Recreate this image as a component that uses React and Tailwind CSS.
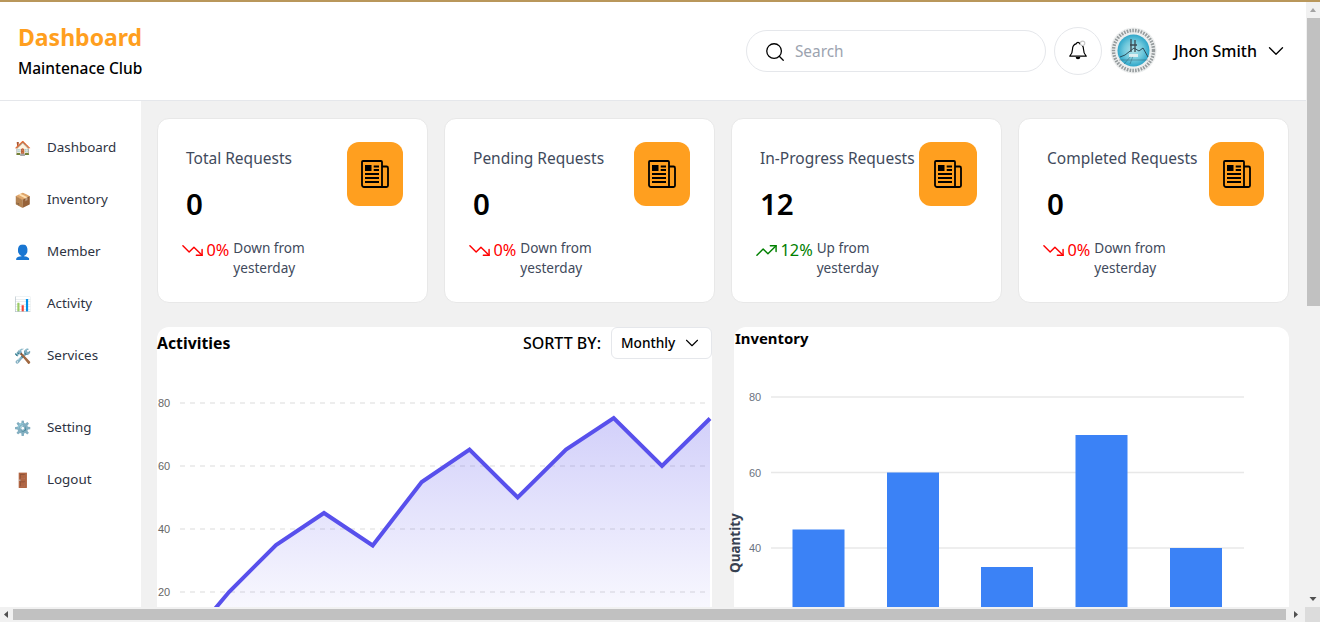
import React from "react";
import { ChevronDown, Search, TrendingDown, TrendingUp } from "lucide-react";

const NewsIcon = () => (
  <svg width="28" height="28" viewBox="0 0 28 28" fill="none">
    <path d="M1 2a1 1 0 0 1 1-1h18a1 1 0 0 1 1 1v25H3a2 2 0 0 1-2-2z" stroke="#000" strokeWidth="1.8" />
    <path d="M21 6.5h4.5a1.5 1.5 0 0 1 1.5 1.5v17.5a1.5 1.5 0 0 1-1.5 1.5H21" stroke="#000" strokeWidth="1.8" />
    <rect x="4" y="5" width="6.5" height="6" fill="#000" />
    <path d="M12.7 6.5H18M12.7 10H18M4 14h14M4 18h14M4 22h14" stroke="#000" strokeWidth="1.8" />
  </svg>
);

const BellIcon = () => (
  <svg width="22" height="22" viewBox="0 0 24 24" fill="none">
    <path d="M12 2.5c-.9 0-1.6.7-1.6 1.4C7.4 4.7 6 7.3 6 10c0 3.5-1 5.6-3 7.6h18c-2-2-3-4.1-3-7.6 0-2.7-1.4-5.3-4.4-6.1 0-.7-.7-1.4-1.6-1.4z" stroke="#000" strokeWidth="1.3" strokeLinejoin="round" />
    <path d="M9.5 18.5a2.5 2.5 0 0 0 5 0z" fill="#000" />
    <circle cx="17" cy="3.6" r="2.4" fill="#fff" stroke="#c8c8c8" strokeWidth="1.2" />
  </svg>
);

const Avatar = () => (
  <svg width="47" height="47" viewBox="0 0 47 47" className="ml-[8px] -mt-[1px] shrink-0">
    <defs>
      <radialGradient id="ball" cx="0.5" cy="0.5" r="0.5">
        <stop offset="0" stopColor="#b4e3ea" />
        <stop offset="0.6" stopColor="#6fc8dc" />
        <stop offset="1" stopColor="#2fa6c9" />
      </radialGradient>
    </defs>
    <circle cx="23.5" cy="23.5" r="23" fill="#eceeee" />
    <circle cx="23.5" cy="23.5" r="20" fill="none" stroke="#5c6468" strokeWidth="3.4" strokeDasharray="1.6 1.2" opacity="0.6" />
    <circle cx="23.5" cy="23.5" r="16" fill="url(#ball)" />
    <path d="M10 30l5-2 9-7 5 3 4-3 5 9" fill="none" stroke="#25404d" strokeWidth="0.9" />
    <path d="M9 33h29M14 37l7-8M20 37l3-8" stroke="#25404d" strokeWidth="0.6" opacity="0.6" />
    <path d="M21 12v13M25 13v12M20 18h7" stroke="#3c4a52" strokeWidth="1.3" />
    <path d="M19 27h9v3h-9z" fill="#f2f5f5" opacity="0.8" />
  </svg>
);

const stats = [
  { t: "Total Requests", v: "0", p: "0%", up: false, d: "Down from", iw: "w-14" },
  { t: "Pending Requests", v: "0", p: "0%", up: false, d: "Down from", iw: "w-14" },
  { t: "In-Progress Requests", v: "12", p: "12%", up: true, d: "Up from", iw: "w-[58px]" },
  { t: "Completed Requests", v: "0", p: "0%", up: false, d: "Down from", iw: "w-[55px]" },
];

const nav = [
  ["🏠", "Dashboard"],
  ["📦", "Inventory"],
  ["👤", "Member"],
  ["📊", "Activity"],
  ["🛠️", "Services"],
];
const nav2 = [
  ["⚙️", "Setting"],
  ["🚪", "Logout"],
];

const NavItem = ({ icon, label }) => (
  <div className="flex h-[52px] items-center pl-[14.5px]">
    <span className="w-[32.5px] text-sm leading-none" style={{ fontFamily: "'Noto Color Emoji', sans-serif" }}>{icon}</span>
    <span className="-mt-[1px] text-[13.4px] text-[#2d3342]">{label}</span>
  </div>
);

const Card = ({ s }) => (
  <div className="flex h-[185px] w-[271px] shrink-0 rounded-xl border border-[#e8e8e8] bg-white pl-[28px] pr-[24px] pt-[23px]">
    <div className="min-w-0 flex-1">
      <div className="mt-[6px] whitespace-nowrap text-[15.5px] leading-5 text-[#414a5c]">{s.t}</div>
      <div className="mt-[18px] text-[29.5px] font-semibold leading-9 text-black">{s.v}</div>
      <div className="-ml-[5px] mt-[16px] flex">
        {s.up ? (
          <TrendingUp size={23} strokeWidth={1.5} className="mt-[1px] shrink-0 text-[#008000]" />
        ) : (
          <TrendingDown size={23} strokeWidth={1.5} className="mt-[1px] shrink-0 text-[#ff0000]" />
        )}
        <span className={`ml-[2.5px] mt-[2px] text-[16.3px] leading-5 ${s.up ? "text-[#008000]" : "text-[#ff0000]"}`}>{s.p}</span>
        <span className="ml-[4px] w-[90px] text-[13.6px] leading-5 text-[#414a5c]">{s.d}<br />yesterday</span>
      </div>
    </div>
    <div className={`flex h-16 ${s.iw} shrink-0 items-center justify-center rounded-xl bg-[#ff9f1f]`}>
      <NewsIcon />
    </div>
  </div>
);

const activity = [[180.6,650],[229,592],[276,545],[324,513],[372.7,545.5],[421.7,482],[469.5,449.5],[517.7,497.5],[566,449.5],[613.7,418],[662,466],[710,418.5]];

const ActivityChart = () => {
  const ox = 157, oy = 327;
  const pts = activity.map(([x, y]) => `${x - ox},${y - oy}`).join(" ");
  const area = `${activity[0][0] - ox},${655 - oy} ${pts} ${710 - ox},${655 - oy}`;
  return (
    <svg width="555" height="340" className="absolute left-0 top-0">
      <defs>
        <linearGradient id="ag" x1="0" y1="0" x2="0" y2="1">
          <stop offset="0" stopColor="#5850ec" stopOpacity="0.27" />
          <stop offset="0.95" stopColor="#5850ec" stopOpacity="0" />
        </linearGradient>
      </defs>
      {[[80, 76], [60, 139], [40, 202], [20, 265]].map(([l, y]) => (
        <g key={l}>
          <line x1="23" x2="553" y1={y} y2={y} stroke="#e8e8e8" strokeWidth="1.5" strokeDasharray="5 5" />
          <text x="1" y={y + 4} fontSize="11" fill="#666" fontFamily="Liberation Sans, sans-serif">{l}</text>
        </g>
      ))}
      <polygon points={area} fill="url(#ag)" />
      <polyline points={pts} fill="none" stroke="#5850ec" strokeWidth="4" />
    </svg>
  );
};

const bars = [[792.5, 52, 529.5], [887, 52, 472.5], [981, 52, 567], [1075.5, 52, 435], [1170, 52, 548]];

const InventoryChart = () => {
  const ox = 734, oy = 327;
  return (
    <svg width="555" height="340" className="absolute left-0 top-0">
      {[[80, 397], [60, 472.5], [40, 548]].map(([l, y]) => (
        <g key={l}>
          <line x1={771 - ox} x2={1244 - ox} y1={y - oy} y2={y - oy} stroke="#e8e8e8" strokeWidth="1.3" />
          <text x={15} y={y - oy + 4} fontSize="11" fill="#6b7280" fontFamily="Liberation Sans, sans-serif">{l}</text>
        </g>
      ))}
      {bars.map(([x, w, y]) => (
        <rect key={x} x={x - ox} y={y - oy} width={w} height={340} fill="#3b82f6" />
      ))}
    </svg>
  );
};

export default function App() {
  return (
    <div className="flex h-[622px] w-[1320px] flex-col overflow-hidden bg-[#f1f1f1]" style={{ fontFamily: "'Noto Sans', 'Open Sans', sans-serif" }}>
      <div className="h-[2px] shrink-0 bg-[#b9975b]" />
      <div className="flex min-h-0 flex-1">
        <div className="flex min-w-0 flex-1 flex-col">
          <header className="flex h-[99px] shrink-0 items-center border-b border-[#e5e7eb] bg-white pl-[18px] pr-[17px]">
            <div className="-mt-[2px] flex-1">
              <div className="-mt-[1px] text-[23px] font-bold leading-8 text-[#ff9f1f]">Dashboard</div>
              <div className="mt-[5px] text-[15.5px] font-medium leading-5 text-black">Maintenace Club</div>
            </div>
            <div className="flex h-[42px] w-[300px] items-center rounded-full border border-[#e5e7eb] pl-[17px] pt-[2px]">
              <Search size={22} strokeWidth={1.4} className="text-black" />
              <span className="ml-[9px] text-[15.4px] text-[#9ca3af]">Search</span>
            </div>
            <div className="ml-2 flex h-12 w-12 items-center justify-center rounded-full border border-[#e5e7eb]">
              <BellIcon />
            </div>
            <Avatar />
            <span className="ml-[17px] text-base font-medium text-black">Jhon Smith</span>
            <ChevronDown size={26} strokeWidth={1.2} className="ml-[6px] text-black" />
          </header>
          <div className="flex min-h-0 flex-1">
            <aside className="w-[141px] shrink-0 bg-white pt-[21px]">
              {nav.map(([i, l]) => <NavItem key={l} icon={i} label={l} />)}
              <div className="h-5" />
              {nav2.map(([i, l]) => <NavItem key={l} icon={i} label={l} />)}
            </aside>
            <main className="min-w-0 flex-1 overflow-hidden pl-4 pt-[17px]">
              <div className="flex gap-4">
                {stats.map((s) => <Card key={s.t} s={s} />)}
              </div>
              <div className="mt-6 flex gap-[22px]">
                <section className="relative h-[340px] w-[555px] shrink-0 rounded-t-xl bg-white">
                  <ActivityChart />
                  <div className="relative flex items-start justify-between">
                    <h2 className="mt-[4px] text-[15.8px] font-bold leading-6 text-black">Activities</h2>
                    <div className="flex items-center">
                      <span className="mr-[10px] text-base font-medium text-black">SORTT BY:</span>
                      <div className="flex h-8 w-[101px] items-center justify-between rounded-md border border-[#e5e7eb] bg-white pl-[9px] pr-[8px] text-[13.7px] font-medium text-black">
                        Monthly <ChevronDown size={22} strokeWidth={1.2} />
                      </div>
                    </div>
                  </div>
                </section>
                <section className="relative h-[340px] w-[555px] shrink-0 rounded-t-xl bg-white">
                  <InventoryChart />
                  <h2 className="relative -mt-[1px] ml-[1px] text-[14.9px] font-bold leading-6 text-black">Inventory</h2>
                  <div className="absolute -left-[39px] top-[206px] w-[80px] -rotate-90 text-center text-[13.5px] font-bold text-[#374151]">Quantity</div>
                </section>
              </div>
            </main>
          </div>
        </div>
        <div className="flex w-[14px] shrink-0 flex-col items-center bg-[#f1f1f1]">
          <svg width="14" height="16" viewBox="0 0 14 16"><path d="M4 10l3-4 3 4z" fill="#a3a3a3" /></svg>
          <div className="h-[288px] w-[13px] bg-[#c1c1c1]" />
          <div className="flex-1" />
          <svg width="14" height="16" viewBox="0 0 14 16"><path d="M3.5 6h7L7 10z" fill="#505050" /></svg>
        </div>
      </div>
      <div className="flex h-[15px] shrink-0 items-center bg-[#f1f1f1]">
        <svg width="13" height="15" viewBox="0 0 13 15"><path d="M8 4v7L4 7.5z" fill="#505050" /></svg>
        <div className="h-[11px] w-[1273px] bg-[#c1c1c1]" />
        <div className="flex-1" />
        <svg width="17" height="15" viewBox="0 0 17 15"><path d="M6 4v7l4-3.5z" fill="#505050" /></svg>
        <div className="h-[15px] w-[15px] bg-[#dcdcdc]" />
      </div>
    </div>
  );
}
